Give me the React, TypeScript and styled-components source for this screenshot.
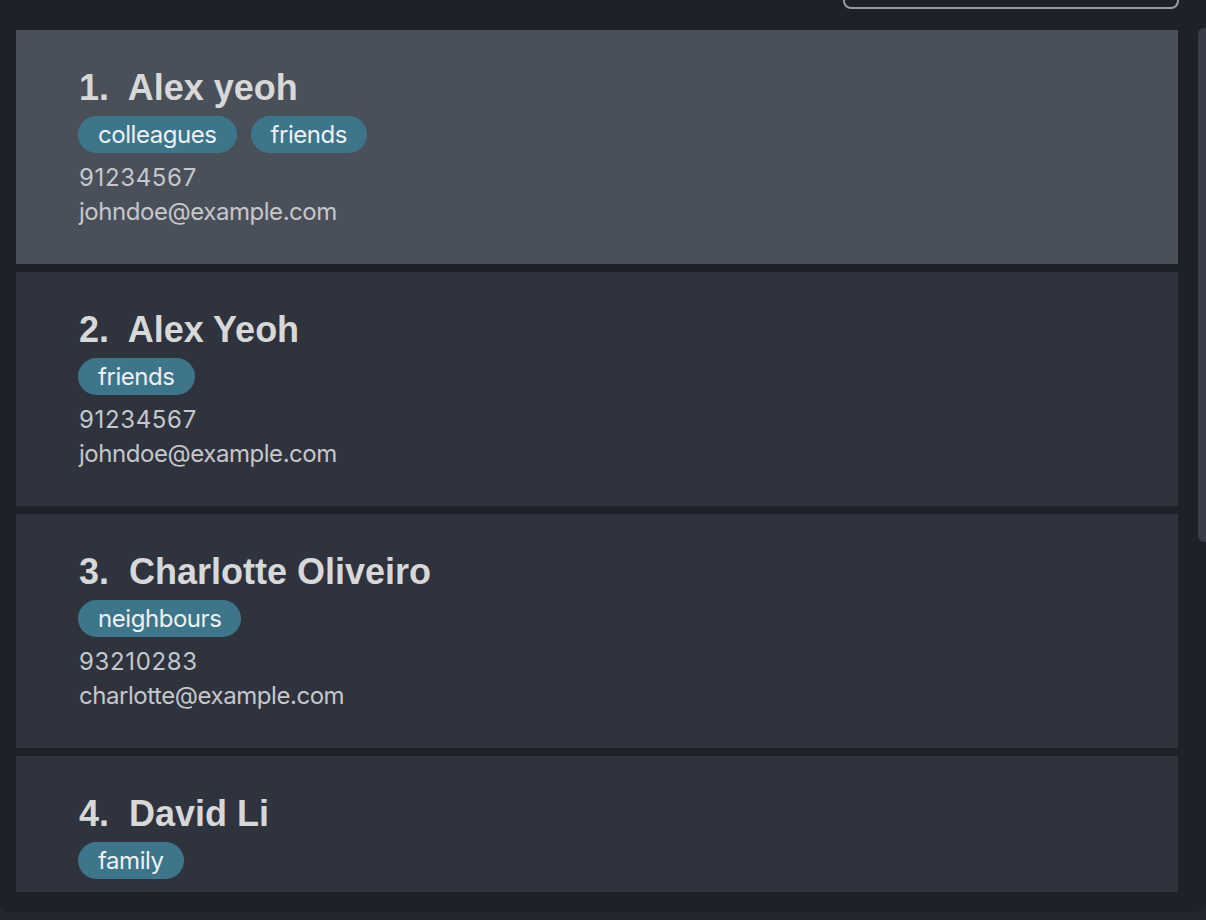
import React from "react";
import styled, { createGlobalStyle } from "styled-components";

const GlobalStyle = createGlobalStyle`
  html, body {
    margin: 0;
    padding: 0;
    background: #24272f;
    overflow: hidden;
  }
  * { box-sizing: border-box; }
`;

const Page = styled.div`
  width: 1206px;
  height: 920px;
  background: #24272f;
`;

const Panel = styled.div`
  height: 912px;
  background: #1f2129;
  border-radius: 0 0 8px 8px;
  display: flex;
  flex-direction: column;
  padding-bottom: 20px;
`;

const Header = styled.div`
  height: 30px;
  display: flex;
  justify-content: flex-end;
  align-items: flex-start;
  padding-right: 27px;
`;

const SearchBox = styled.div`
  width: 336px;
  height: 40px;
  margin-top: -31px;
  border: 2px solid #9a9ca3;
  border-radius: 8px;
`;

const Body = styled.div`
  flex: 1;
  min-height: 0;
  display: flex;
  align-items: stretch;
  padding-left: 16px;
`;

const List = styled.div`
  flex: 0 0 1162px;
  display: flex;
  flex-direction: column;
  gap: 8px;
  overflow: hidden;
`;

const Track = styled.div`
  flex: 0 0 12px;
  margin-left: 20px;
  margin-top: -2px;
`;

const Thumb = styled.div`
  height: 514px;
  background: #3a3d48;
  border-radius: 6px;
`;

const Card = styled.div<{ $selected?: boolean }>`
  flex: 0 0 234px;
  background: ${(p) => (p.$selected ? "#4a505a" : "#2f333e")};
  padding: 37px 0 0 62px;
  display: flex;
  flex-direction: column;
`;

const Name = styled.div`
  font-family: "Liberation Sans", Arial, sans-serif;
  font-weight: 700;
  font-size: 36px;
  line-height: 42px;
  color: #d8d8d8;
  white-space: pre;
  padding-left: 1px;
`;

const Tags = styled.div`
  display: flex;
  gap: 14px;
  margin-top: 7px;
  margin-bottom: 8px;
`;

const Tag = styled.span`
  font-family: Inter, "Noto Sans", sans-serif;
  font-size: 24px;
  line-height: 29px;
  letter-spacing: -0.45px;
  padding: 4px 20px;
  background: #3d768a;
  color: #eef0f2;
  border-radius: 19px;
`;

const Detail = styled.div<{ $numeric?: boolean }>`
  font-family: Inter, "Noto Sans", sans-serif;
  font-size: 24px;
  line-height: 34px;
  letter-spacing: ${(p) => (p.$numeric ? "0.65px" : "-0.45px")};
  color: #c6c7ca;
  padding-left: 1px;
`;

type Person = {
  name: string;
  tags: string[];
  phone: string;
  email: string;
};

const people: Person[] = [
  { name: "Alex yeoh", tags: ["colleagues", "friends"], phone: "91234567", email: "johndoe@example.com" },
  { name: "Alex Yeoh", tags: ["friends"], phone: "91234567", email: "johndoe@example.com" },
  { name: "Charlotte Oliveiro", tags: ["neighbours"], phone: "93210283", email: "charlotte@example.com" },
  { name: "David Li", tags: ["family"], phone: "91031282", email: "lidavid@example.com" },
];

export default function App() {
  return (
    <Page>
      <GlobalStyle />
      <Panel>
        <Header>
          <SearchBox />
        </Header>
        <Body>
          <List>
            {people.map((p, i) => (
              <Card key={i} $selected={i === 0}>
                <Name>{`${i + 1}.  ${p.name}`}</Name>
                <Tags>
                  {p.tags.map((t) => (
                    <Tag key={t}>{t}</Tag>
                  ))}
                </Tags>
                <Detail $numeric>{p.phone}</Detail>
                <Detail>{p.email}</Detail>
              </Card>
            ))}
          </List>
          <Track>
            <Thumb />
          </Track>
        </Body>
      </Panel>
    </Page>
  );
}
